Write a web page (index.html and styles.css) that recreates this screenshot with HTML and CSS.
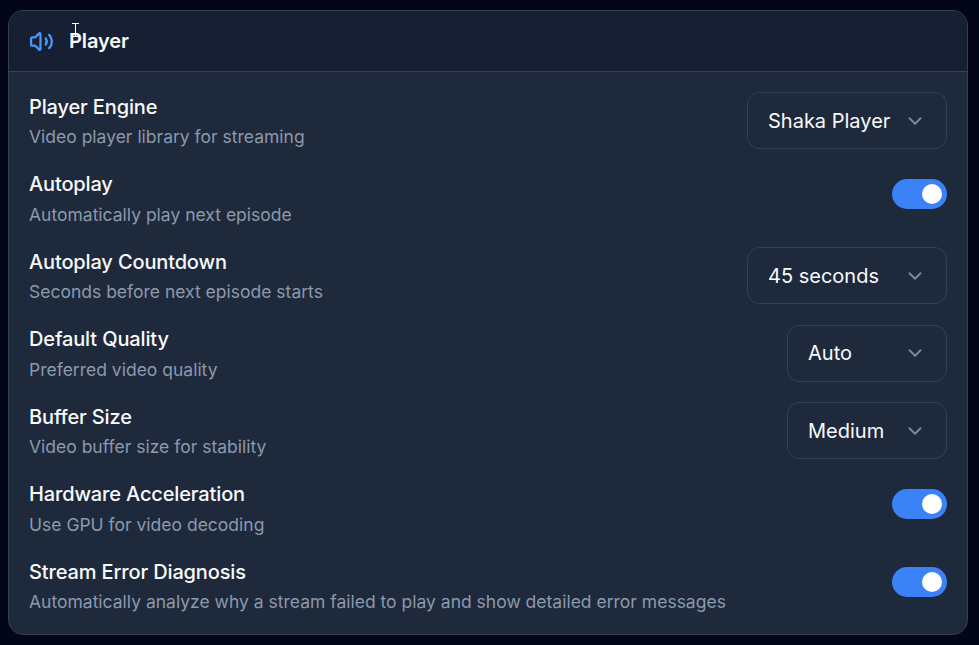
FILE: index.html
```html
<!DOCTYPE html>
<html lang="en">
<head>
    <meta charset="UTF-8">
    <title>Settings - Player</title>
    <link rel="stylesheet" href="styles.css">
</head>
<body>
    <div class="card">
        <div class="card-header">
            <svg class="header-icon" viewBox="0 0 24 24">
                <path d="M11 4.702a.705.705 0 0 0-1.203-.498L6.413 7.587A1.4 1.4 0 0 1 5.416 8H3a1 1 0 0 0-1 1v6a1 1 0 0 0 1 1h2.416a1.4 1.4 0 0 1 .997.413l3.383 3.384A.705.705 0 0 0 11 19.298z"/>
                <path d="M16 9a5 5 0 0 1 0 6"/>
                <path d="M19.364 18.364a9 9 0 0 0 0-12.728"/>
            </svg>
            <h2 class="card-title">Player</h2>
        </div>
        <div class="card-body">
            <div class="row">
                <div class="row-text">
                    <div class="row-title">Player Engine</div>
                    <div class="row-desc">Video player library for streaming</div>
                </div>
                <div class="select select-wide">
                    <span>Shaka Player</span>
                    <svg class="chevron" viewBox="0 0 24 24"><path d="m6 9 6 6 6-6"/></svg>
                </div>
            </div>
            <div class="row">
                <div class="row-text">
                    <div class="row-title">Autoplay</div>
                    <div class="row-desc">Automatically play next episode</div>
                </div>
                <div class="toggle"><div class="knob"></div></div>
            </div>
            <div class="row">
                <div class="row-text">
                    <div class="row-title">Autoplay Countdown</div>
                    <div class="row-desc">Seconds before next episode starts</div>
                </div>
                <div class="select select-wide">
                    <span>45 seconds</span>
                    <svg class="chevron" viewBox="0 0 24 24"><path d="m6 9 6 6 6-6"/></svg>
                </div>
            </div>
            <div class="row">
                <div class="row-text">
                    <div class="row-title">Default Quality</div>
                    <div class="row-desc">Preferred video quality</div>
                </div>
                <div class="select">
                    <span>Auto</span>
                    <svg class="chevron" viewBox="0 0 24 24"><path d="m6 9 6 6 6-6"/></svg>
                </div>
            </div>
            <div class="row">
                <div class="row-text">
                    <div class="row-title">Buffer Size</div>
                    <div class="row-desc">Video buffer size for stability</div>
                </div>
                <div class="select">
                    <span>Medium</span>
                    <svg class="chevron" viewBox="0 0 24 24"><path d="m6 9 6 6 6-6"/></svg>
                </div>
            </div>
            <div class="row">
                <div class="row-text">
                    <div class="row-title">Hardware Acceleration</div>
                    <div class="row-desc">Use GPU for video decoding</div>
                </div>
                <div class="toggle"><div class="knob"></div></div>
            </div>
            <div class="row">
                <div class="row-text">
                    <div class="row-title">Stream Error Diagnosis</div>
                    <div class="row-desc">Automatically analyze why a stream failed to play and show detailed error messages</div>
                </div>
                <div class="toggle"><div class="knob"></div></div>
            </div>
        </div>
    </div>
    <!-- mouse cursor caught in the screenshot -->
    <svg class="cursor" viewBox="0 0 7 14"><path d="M0 .5h7M3.5 .5v13M0 13.5h7"/></svg>
</body>
</html>
```

FILE: styles.css
```css
body {
    margin: 0;
    padding: 10px 0 0 8px;
    height: 645px;
    box-sizing: border-box;
    overflow: hidden;
    background: #020617;
    font-family: Inter, "Liberation Sans", sans-serif;
    color: #f8fafc;
}
.card {
    width: 960px;
    box-sizing: border-box;
    background: #1e293b;
    border: 1px solid #334155;
    border-radius: 15px;
    overflow: hidden;
}
.card-header {
    display: flex;
    align-items: center;
    gap: 15px;
    height: 60px;
    padding: 0 20px;
    background: #172033;
    border-bottom: 1px solid #334155;
}
.header-icon {
    width: 25px;
    height: 25px;
    fill: none;
    stroke: #4b97f8;
    stroke-width: 2.2;
    stroke-linecap: round;
    stroke-linejoin: round;
}
.card-title {
    margin: 0;
    font-size: 20px;
    font-weight: 600;
    letter-spacing: -0.1px;
}
.card-body {
    display: flex;
    flex-direction: column;
    gap: 20px;
    padding: 19.9px 20px 19.6px;
}
.row {
    display: flex;
    justify-content: space-between;
    align-items: center;
}
.row-title {
    font-size: 20px;
    font-weight: 500;
    line-height: 30px;
    letter-spacing: -0.14px;
}
.row-desc {
    margin-top: 2.5px;
    font-size: 17.5px;
    line-height: 25px;
    color: #8b99ad;
}
.select {
    display: flex;
    justify-content: space-between;
    align-items: center;
    width: 160px;
    height: 57px;
    box-sizing: border-box;
    padding: 0 20px;
    border: 1px solid #334155;
    border-radius: 12.5px;
    font-size: 20px;
}
.select-wide {
    width: 200px;
}
.chevron {
    width: 22px;
    height: 22px;
    fill: none;
    stroke: #94a3b8;
    stroke-width: 2;
    stroke-linecap: round;
    stroke-linejoin: round;
    opacity: 0.8;
}
.toggle {
    display: flex;
    justify-content: flex-end;
    align-items: center;
    width: 55px;
    height: 30px;
    margin-bottom: 8px;
    padding-right: 5px;
    box-sizing: border-box;
    background: #3b82f6;
    border-radius: 15px;
}
.knob {
    width: 20px;
    height: 20px;
    background: #fff;
    border-radius: 50%;
}
.cursor {
    position: absolute;
    left: 72px;
    top: 23px;
    width: 7px;
    height: 14px;
    fill: none;
    stroke: #fff;
    stroke-width: 1;
}
```
